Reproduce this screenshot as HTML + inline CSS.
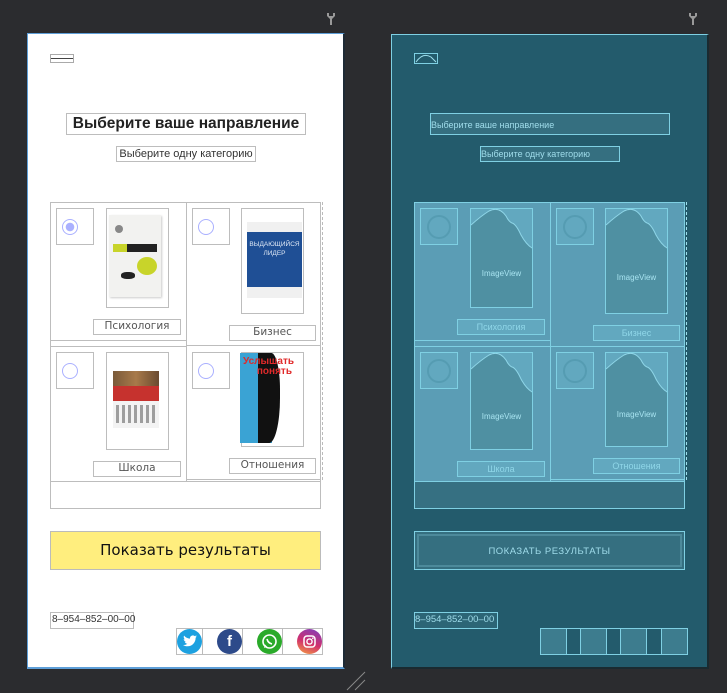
<!DOCTYPE html>
<html><head><meta charset="utf-8">
<style>
*{margin:0;padding:0;box-sizing:border-box}
body{width:727px;height:693px;background:#2b2c2f;position:relative;overflow:hidden;font-family:"Liberation Sans","DejaVu Sans",sans-serif}
.a{position:absolute;white-space:nowrap}
.g{border:1px solid #bdbdbd}
.lbl{font-family:"DejaVu Sans","Liberation Sans",sans-serif;font-size:10.5px;color:#555;text-align:center;line-height:13px}
.rad{position:absolute;left:5px;top:10px;width:16px;height:16px;border-radius:50%;border:1.5px solid #aab0ff}
.b{border:1px solid #7fd0e3}
.bl{font-size:9px;color:#8fd6e8;text-align:center}
.iv{background:#4f90a2}
.ivt{font-size:8px;color:#a8e3f0;text-align:center;position:absolute;width:100%}
</style></head><body>
<div class="a" style="left:326px;top:12px;width:10px;height:14px">
<svg width="10" height="14"><path d="M1 1v3l3 3v6h2V7l3-3V1H7v3H3V1z" fill="#9a9a9a"/></svg></div>
<div class="a" style="left:688px;top:12px;width:10px;height:14px">
<svg width="10" height="14"><path d="M1 1v3l3 3v6h2V7l3-3V1H7v3H3V1z" fill="#9a9a9a"/></svg></div>
<svg class="a" style="left:345px;top:670px" width="22" height="22"><path d="M2 20L20 2M10 20L20 10" stroke="#888" stroke-width="1"/></svg>

<!-- LEFT -->
<div class="a" style="left:27px;top:33px;width:318px;height:636px;background:#fff;border:1px solid #5e9fd8;border-right:2px solid #1e2a35;border-bottom:2px solid #5e9fd8"></div>
<div class="a g" style="left:50px;top:54px;width:24px;height:9px;border-color:#aaa"><div style="margin-top:3px;height:1px;background:#444"></div></div>
<div class="a g" style="left:66px;top:113px;width:240px;height:22px;font-weight:bold;font-size:15.5px;color:#222;text-align:center;line-height:20px">Выберите ваше направление</div>
<div class="a g" style="left:116px;top:146px;width:140px;height:16px;font-size:11px;color:#333;text-align:center;line-height:14px">Выберите одну категорию</div>

<div class="a g" style="left:50px;top:202px;width:271px;height:307px"></div>
<div class="a" style="left:186px;top:202px;width:1px;height:280px;background:#bdbdbd"></div>
<div class="a" style="left:50px;top:340px;width:137px;height:1px;background:#bdbdbd"></div>
<div class="a" style="left:186px;top:345px;width:135px;height:1px;background:#bdbdbd"></div>
<div class="a" style="left:50px;top:346px;width:137px;height:1px;background:#bdbdbd"></div>
<div class="a" style="left:186px;top:479px;width:135px;height:1px;background:#bdbdbd"></div>
<div class="a" style="left:50px;top:481px;width:271px;height:1px;background:#bdbdbd"></div>
<div class="a" style="left:322px;top:202px;width:0;height:278px;border-left:1px dashed #bbb"></div>

<div class="a g" style="left:56px;top:208px;width:38px;height:37px"><div class="rad" style="background:radial-gradient(circle,#aab0ff 0 4px,#fff 4.5px)"></div></div>
<div class="a g" style="left:106px;top:208px;width:63px;height:100px"></div>
<div class="a" style="left:109px;top:215px;width:52px;height:82px;background:#f2f2f0;box-shadow:1px 1px 2px #ccc">
 <div class="a" style="left:4px;top:29px;width:44px;height:8px;background:#222"></div>
 <div class="a" style="left:4px;top:29px;width:14px;height:8px;background:#c8d42a"></div>
 <div class="a" style="left:28px;top:42px;width:20px;height:18px;border-radius:50%;background:#c8d42a"></div>
 <div class="a" style="left:12px;top:57px;width:14px;height:7px;background:#222;border-radius:40%"></div>
 <div class="a" style="left:6px;top:10px;width:8px;height:8px;border-radius:50%;background:#888"></div>
</div>
<div class="a g lbl" style="left:93px;top:319px;width:88px;height:16px">Психология</div>

<div class="a g" style="left:192px;top:208px;width:38px;height:37px"><div class="rad"></div></div>
<div class="a g" style="left:241px;top:208px;width:63px;height:106px"></div>
<div class="a" style="left:247px;top:222px;width:55px;height:76px;background:#f0f0f0;overflow:hidden">
 <div class="a" style="left:0;top:10px;width:55px;height:55px;background:#1f4f95"></div>
 <div class="a" style="left:0;top:18px;width:55px;font-size:6.5px;color:#dfe8f5;text-align:center;line-height:9px">ВЫДАЮЩИЙСЯ<br>ЛИДЕР</div>
</div>
<div class="a g lbl" style="left:229px;top:325px;width:87px;height:16px">Бизнес</div>

<div class="a g" style="left:56px;top:352px;width:38px;height:37px"><div class="rad"></div></div>
<div class="a g" style="left:106px;top:352px;width:63px;height:98px"></div>
<div class="a" style="left:113px;top:371px;width:46px;height:57px;background:#f3f3f3">
 <div class="a" style="left:0;top:0;width:46px;height:15px;background:linear-gradient(90deg,#7a5a3a,#a87a4a,#6a4a30)"></div>
 <div class="a" style="left:0;top:15px;width:46px;height:15px;background:#c6322e"></div>
 <div class="a" style="left:3px;top:34px;width:40px;height:18px;background:repeating-linear-gradient(90deg,#666 0 3px,transparent 3px 6px);opacity:.6"></div>
</div>
<div class="a g lbl" style="left:93px;top:461px;width:88px;height:16px">Школа</div>

<div class="a g" style="left:192px;top:352px;width:38px;height:37px"><div class="rad"></div></div>
<div class="a g" style="left:241px;top:352px;width:63px;height:95px"></div>
<div class="a" style="left:240px;top:353px;width:62px;height:90px;background:#fff;overflow:hidden">
 <div class="a" style="left:0;top:0;width:32px;height:90px;background:#3aa3d4"></div>
 <div class="a" style="left:18px;top:0;width:22px;height:90px;background:#111;border-radius:0 40% 50% 0"></div>
 <div class="a" style="left:3px;top:4px;font-size:10px;font-weight:bold;color:#e02a2a;line-height:10px">Услышать<br>&nbsp;&nbsp;&nbsp;&nbsp;&nbsp;понять</div>
</div>
<div class="a g lbl" style="left:229px;top:458px;width:87px;height:16px">Отношения</div>

<div class="a" style="left:50px;top:531px;width:271px;height:39px;background:#ffee7e;border:1px solid #bbb;font-size:15px;color:#111;text-align:center;line-height:37px;font-family:'DejaVu Sans',sans-serif">Показать результаты</div>
<div class="a g" style="left:50px;top:612px;width:84px;height:17px;font-size:10px;color:#333;line-height:14px;padding-left:1px">8–954–852–00–00</div>
<div class="a g" style="left:176px;top:628px;width:147px;height:27px"></div>
<div class="a" style="left:202px;top:628px;width:1px;height:27px;background:#bbb"></div>
<div class="a" style="left:242px;top:628px;width:1px;height:27px;background:#bbb"></div>
<div class="a" style="left:282px;top:628px;width:1px;height:27px;background:#bbb"></div>
<div class="a" style="left:177px;top:629px;width:25px;height:25px;border-radius:50%;background:#1da1e0;text-align:center">
<svg width="14" height="12" style="margin-top:6px"><path d="M14 1.5c-.5.2-1 .4-1.6.4.6-.4 1-.9 1.2-1.5-.6.3-1.2.6-1.8.7A2.9 2.9 0 007 3.6 8 8 0 011.1.6a2.9 2.9 0 00.9 3.8c-.5 0-.9-.1-1.3-.4 0 1.4 1 2.5 2.3 2.8-.4.1-.9.1-1.3 0 .4 1.1 1.4 2 2.7 2A5.8 5.8 0 010 10c1.3.8 2.8 1.3 4.4 1.3 5.3 0 8.2-4.4 8.2-8.2v-.4c.6-.4 1-.9 1.4-1.4z" fill="#fff"/></svg></div>
<div class="a" style="left:217px;top:629px;width:25px;height:25px;border-radius:50%;background:#2d4a8a;color:#fff;font-weight:bold;font-size:15px;text-align:center;line-height:26px">f</div>
<div class="a" style="left:257px;top:629px;width:25px;height:25px;border-radius:50%;background:#2aaa2a">
<svg width="25" height="25"><circle cx="12.5" cy="12.5" r="6.5" fill="none" stroke="#fff" stroke-width="1.6"/><path d="M7 19l1-3.5 2 2z" fill="#fff"/><path d="M10 10q1 4 5 5" stroke="#fff" stroke-width="1.6" fill="none"/></svg></div>
<div class="a" style="left:297px;top:629px;width:25px;height:25px;border-radius:50%;background:linear-gradient(200deg,#7b3fc0,#d1306d 55%,#f5a340)">
<svg width="25" height="25"><rect x="7" y="7" width="11" height="11" rx="3" fill="none" stroke="#fff" stroke-width="1.5"/><circle cx="12.5" cy="12.5" r="2.6" fill="none" stroke="#fff" stroke-width="1.4"/><circle cx="15.8" cy="9.2" r=".8" fill="#fff"/></svg></div>

<!-- RIGHT -->
<div class="a" style="left:391px;top:34px;width:318px;height:635px;background:#235b6c;border:1px solid #7fd0e3;border-right:2px solid #1a2a30;border-bottom:2px solid #1a2a30"></div>
<div class="a b" style="left:414px;top:53px;width:24px;height:11px"><svg width="22" height="9" style="display:block"><path d="M1 8Q8 -2 16 3L21 8" stroke="#9fe0ee" fill="none" stroke-width="1"/></svg></div>
<div class="a b" style="left:430px;top:113px;width:240px;height:22px;background:#356f80;font-size:9px;color:#9fdcea;line-height:22px">Выберите ваше направление</div>
<div class="a b" style="left:480px;top:146px;width:140px;height:16px;background:#356f80;font-size:9px;color:#9fdcea;line-height:14px">Выберите одну категорию</div>

<div class="a b" style="left:414px;top:202px;width:271px;height:307px;background:#5b9db5"></div>
<div class="a" style="left:415px;top:481px;width:269px;height:27px;background:#367082;border-top:1px solid #7fd0e3"></div>
<div class="a" style="left:550px;top:202px;width:1px;height:280px;background:#7fd0e3"></div>
<div class="a" style="left:414px;top:340px;width:137px;height:1px;background:#7fd0e3"></div>
<div class="a" style="left:414px;top:346px;width:271px;height:1px;background:#7fd0e3"></div>
<div class="a" style="left:550px;top:479px;width:135px;height:1px;background:#7fd0e3"></div>
<div class="a" style="left:686px;top:202px;width:0;height:278px;border-left:1px dashed #9fe0ee"></div>

<div class="a b" style="left:420px;top:208px;width:38px;height:37px;background:#62a8bf"><div style="margin:6px;width:24px;height:24px;border-radius:50%;border:2px solid #559cb2"></div></div>
<div class="a b iv" style="left:470px;top:208px;width:63px;height:100px;overflow:hidden"><svg class="a" style="left:0;top:0" width="63" height="45"><path d="M0 0H63V40Q56 37 50 26Q45 15 41 14Q38 13 35 7Q28 -3 18 2Q10 7 0 16Z" fill="#62a8bf"/><path d="M0 16Q10 7 18 2Q28 -3 35 7Q38 13 41 14Q45 15 50 26Q56 37 63 40" fill="none" stroke="#8fd6e8"/></svg><div class="ivt" style="top:60px">ImageView</div></div>
<div class="a b bl" style="left:457px;top:319px;width:88px;height:16px;background:#62a8bf;line-height:14px">Психология</div>

<div class="a b" style="left:556px;top:208px;width:38px;height:37px;background:#62a8bf"><div style="margin:6px;width:24px;height:24px;border-radius:50%;border:2px solid #559cb2"></div></div>
<div class="a b iv" style="left:605px;top:208px;width:63px;height:106px;overflow:hidden"><svg class="a" style="left:0;top:0" width="63" height="45"><path d="M0 0H63V40Q56 37 50 26Q45 15 41 14Q38 13 35 7Q28 -3 18 2Q10 7 0 16Z" fill="#62a8bf"/><path d="M0 16Q10 7 18 2Q28 -3 35 7Q38 13 41 14Q45 15 50 26Q56 37 63 40" fill="none" stroke="#8fd6e8"/></svg><div class="ivt" style="top:64px">ImageView</div></div>
<div class="a b bl" style="left:593px;top:325px;width:87px;height:16px;background:#62a8bf;line-height:14px">Бизнес</div>

<div class="a b" style="left:420px;top:352px;width:38px;height:37px;background:#62a8bf"><div style="margin:6px;width:24px;height:24px;border-radius:50%;border:2px solid #559cb2"></div></div>
<div class="a b iv" style="left:470px;top:352px;width:63px;height:98px;overflow:hidden"><svg class="a" style="left:0;top:0" width="63" height="45"><path d="M0 0H63V40Q56 37 50 26Q45 15 41 14Q38 13 35 7Q28 -3 18 2Q10 7 0 16Z" fill="#62a8bf"/><path d="M0 16Q10 7 18 2Q28 -3 35 7Q38 13 41 14Q45 15 50 26Q56 37 63 40" fill="none" stroke="#8fd6e8"/></svg><div class="ivt" style="top:59px">ImageView</div></div>
<div class="a b bl" style="left:457px;top:461px;width:88px;height:16px;background:#62a8bf;line-height:14px">Школа</div>

<div class="a b" style="left:556px;top:352px;width:38px;height:37px;background:#62a8bf"><div style="margin:6px;width:24px;height:24px;border-radius:50%;border:2px solid #559cb2"></div></div>
<div class="a b iv" style="left:605px;top:352px;width:63px;height:95px;overflow:hidden"><svg class="a" style="left:0;top:0" width="63" height="45"><path d="M0 0H63V40Q56 37 50 26Q45 15 41 14Q38 13 35 7Q28 -3 18 2Q10 7 0 16Z" fill="#62a8bf"/><path d="M0 16Q10 7 18 2Q28 -3 35 7Q38 13 41 14Q45 15 50 26Q56 37 63 40" fill="none" stroke="#8fd6e8"/></svg><div class="ivt" style="top:57px">ImageView</div></div>
<div class="a b bl" style="left:593px;top:458px;width:87px;height:16px;background:#62a8bf;line-height:14px">Отношения</div>

<div class="a b" style="left:414px;top:531px;width:271px;height:39px;background:#356f80;padding:2px"><div style="border:2px solid #4d8a9b;height:100%;font-size:9.5px;color:#9fdcea;text-align:center;line-height:31px;letter-spacing:.5px">ПОКАЗАТЬ РЕЗУЛЬТАТЫ</div></div>
<div class="a b" style="left:414px;top:612px;width:84px;height:17px;background:#2c6576;font-size:9.5px;color:#9fdcea;line-height:14px">8–954–852–00–00</div>
<div class="a b" style="left:540px;top:628px;width:148px;height:27px;background:#235b6c"></div>
<div class="a b" style="left:540px;top:628px;width:27px;height:27px;background:#3d7c8e"></div>
<div class="a b" style="left:580px;top:628px;width:27px;height:27px;background:#3d7c8e"></div>
<div class="a b" style="left:620px;top:628px;width:27px;height:27px;background:#3d7c8e"></div>
<div class="a b" style="left:661px;top:628px;width:27px;height:27px;background:#3d7c8e"></div>
</body></html>
